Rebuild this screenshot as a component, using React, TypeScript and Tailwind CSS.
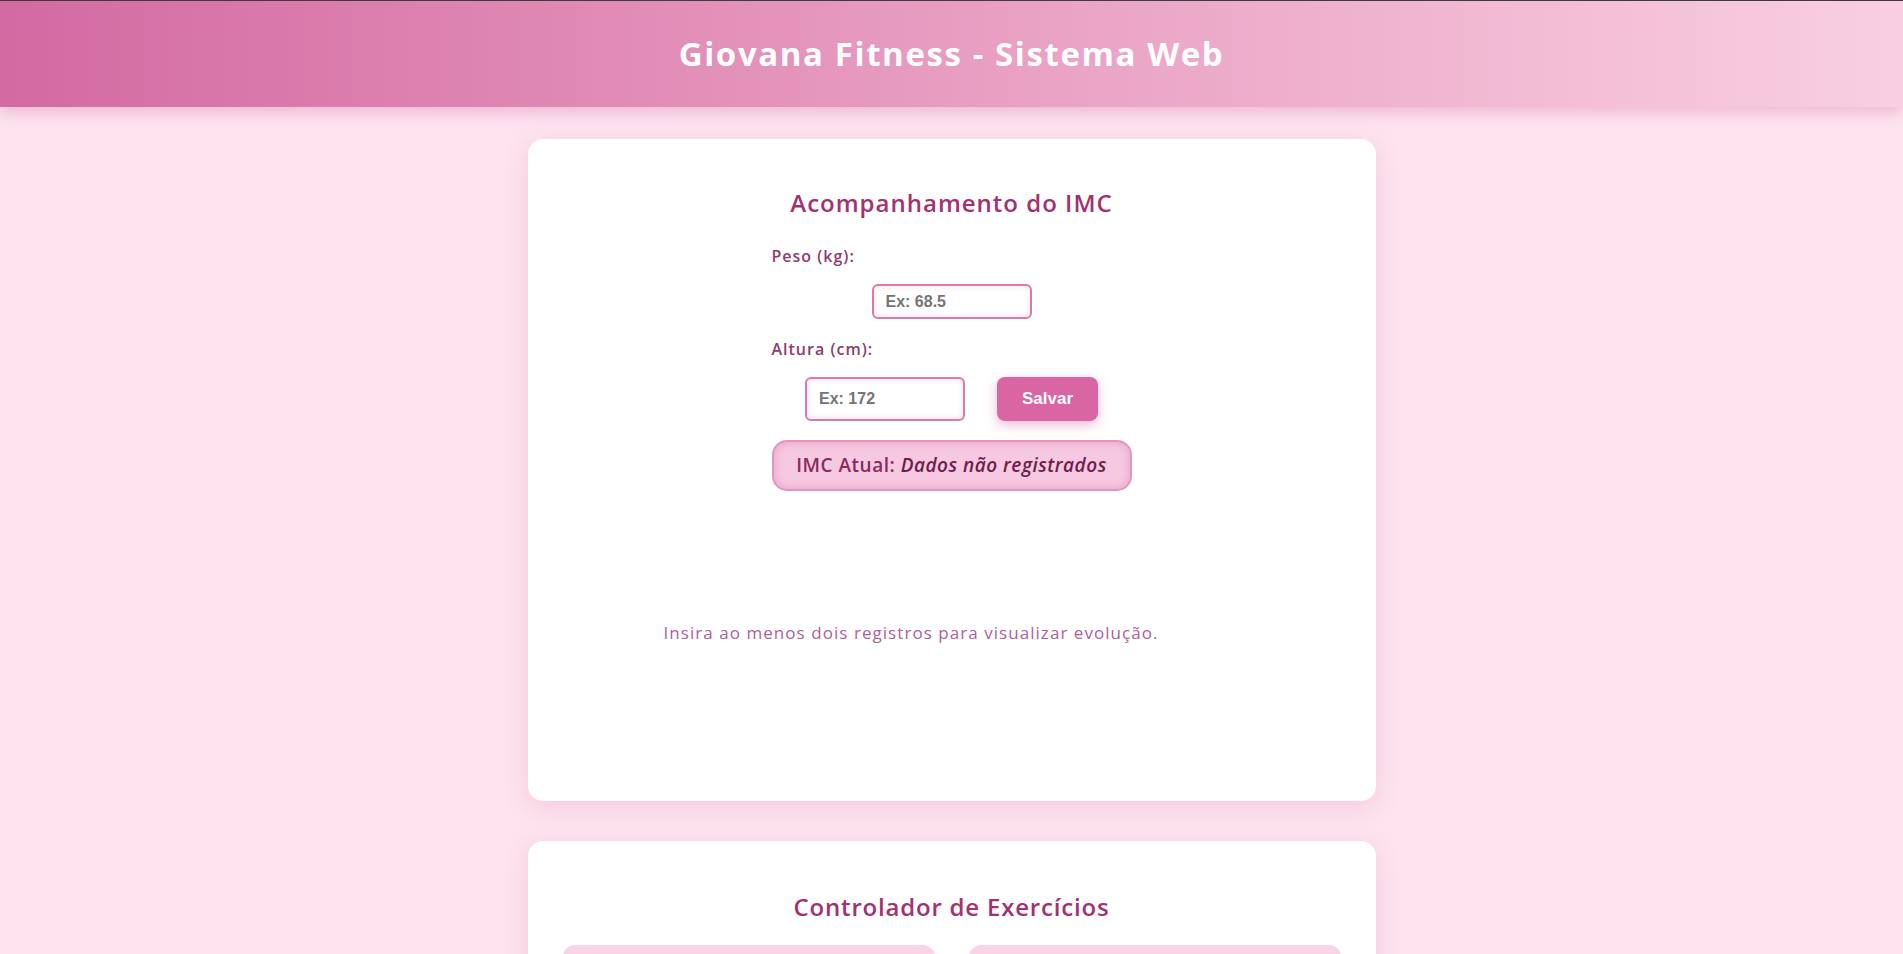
export default function App() {
  return (
    <div className="min-h-screen bg-[#fde4ef] font-['Open_Sans',sans-serif]">
      <header className="flex h-[107px] items-center justify-center border-t border-[#3c3c3c] bg-gradient-to-r from-[#d36aa2] to-[#f9cfe1] shadow-[0_6px_14px_rgba(214,107,163,0.35)]">
        <h1 className="text-[33px] font-bold tracking-[1.6px] text-white">Giovana Fitness - Sistema Web</h1>
      </header>

      <main className="flex flex-col items-center gap-[40px] pt-[32px] pb-10">
        <section className="h-[662px] w-[848px] rounded-[15px] bg-white pt-[46px] shadow-[0_6px_24px_rgba(214,107,163,0.22)]">
          <h2 className="text-center text-[24px] leading-[36px] font-semibold tracking-[1px] text-[#a3326e]">Acompanhamento do IMC</h2>

          <div className="mx-auto mt-[24px] w-[360px]">
            <label className="block text-[16px] leading-[22px] font-semibold tracking-[1px] text-[#8e3d6c]">Peso (kg):</label>
            <div className="mt-[17px] flex justify-center">
              <input
                type="number"
                placeholder="Ex: 68.5"
                className="h-[35px] w-[160px] rounded-[6px] border-2 border-[#d97aa8] bg-white px-[12px] font-['Liberation_Sans',sans-serif] text-[16px] font-bold text-[#555] shadow-[inset_0_0_6px_rgba(240,150,195,0.35)] outline-none placeholder:text-[#757575]"
              />
            </div>

            <label className="mt-[19px] block text-[16px] leading-[22px] font-semibold tracking-[1px] text-[#8e3d6c]">Altura (cm):</label>
            <div className="mt-[17px] flex justify-center gap-[32px]">
              <input
                type="number"
                placeholder="Ex: 172"
                className="h-[44px] w-[160px] rounded-[6px] border-2 border-[#d97aa8] bg-white px-[12px] font-['Liberation_Sans',sans-serif] text-[16px] font-bold text-[#555] shadow-[inset_0_0_6px_rgba(240,150,195,0.35)] outline-none placeholder:text-[#757575]"
              />
              <button
                type="button"
                className="h-[44px] w-[101px] rounded-[8px] bg-[#d966a3] font-['Liberation_Sans',sans-serif] text-[17px] font-bold text-white shadow-[0_4px_12px_rgba(217,102,163,0.45)]"
              >
                Salvar
              </button>
            </div>

            <div className="mt-[19px] flex h-[51px] items-center justify-center rounded-[15px] border-2 border-[#e096bf] bg-[#f6c8e1] text-[19px] tracking-[0.5px] shadow-[inset_0_0_8px_rgba(200,90,150,0.35)]">
              <span className="font-semibold text-[#8a2a5e]">IMC Atual:&nbsp;</span>
              <em className="font-semibold text-[#6e1d4b]">Dados não registrados</em>
            </div>
          </div>

          <p className="mt-[130px] pl-[136px] text-[17px] leading-[24px] tracking-[1.05px] text-[#b0609a]">
            Insira ao menos dois registros para visualizar evolução.
          </p>
        </section>

        <section className="w-[848px] rounded-[15px] bg-white px-[35px] pt-[48px] pb-[35px] shadow-[0_6px_24px_rgba(214,107,163,0.22)]">
          <h2 className="text-center text-[24px] leading-[36px] font-semibold tracking-[0.8px] text-[#a3326e]">Controlador de Exercícios</h2>
          <div className="mt-[20px] grid grid-cols-2 gap-[34px]">
            <div className="h-[220px] rounded-[12px] bg-[#f9d4e6]" />
            <div className="h-[220px] rounded-[12px] bg-[#f9d4e6]" />
          </div>
        </section>
      </main>
    </div>
  )
}
